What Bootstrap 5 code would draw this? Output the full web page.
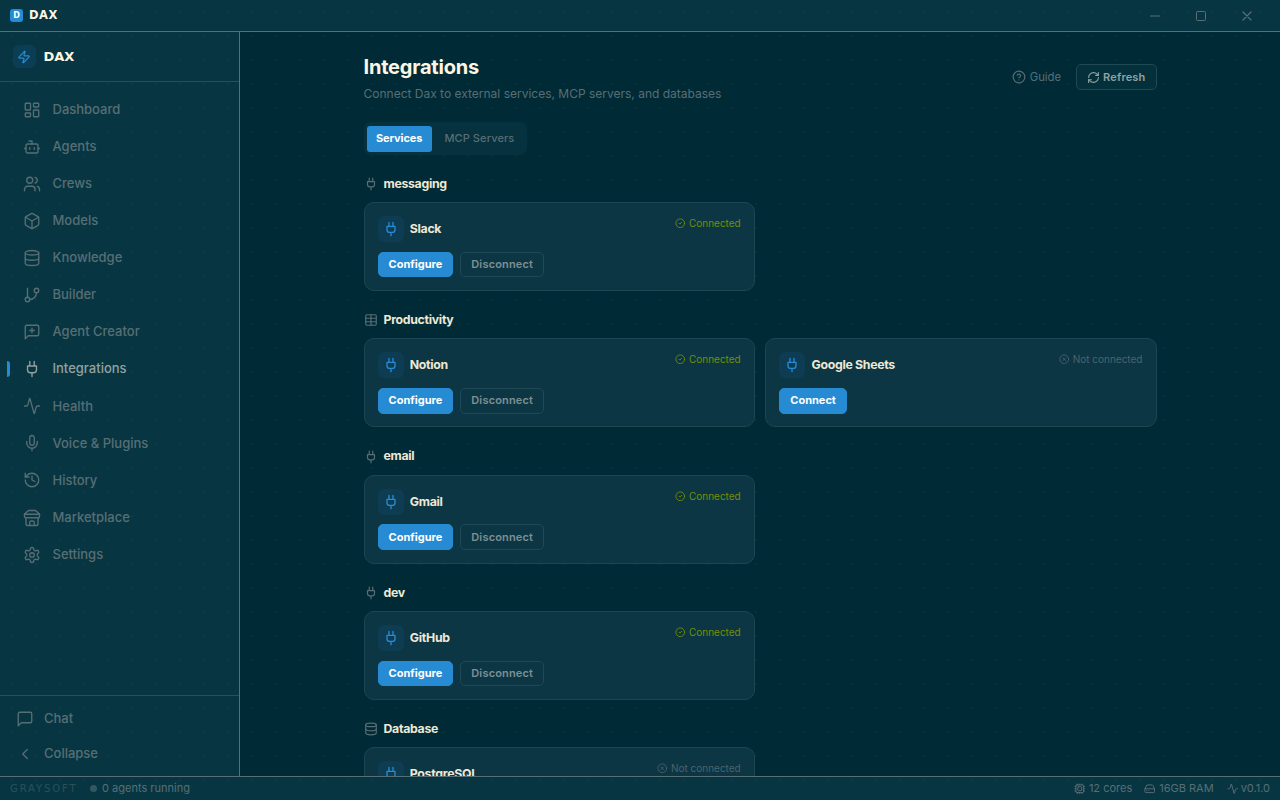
<!DOCTYPE html>
<html lang="en">
<head>
    <meta charset="UTF-8">
    <meta name="viewport" content="width=device-width, initial-scale=1.0">
    <title>DAX - Integrations</title>
    <link href="https://cdn.jsdelivr.net/npm/bootstrap@5.3.0/dist/css/bootstrap.min.css" rel="stylesheet">
    <style>
        :root {
            --base03: #002b36;
            --base02: #073642;
            --base01: #586e75;
            --base1: #93a1a1;
            --cream: #fdf6e3;
            --blue: #268bd2;
            --dots: radial-gradient(circle at 12px 12px, rgba(88, 110, 117, .09) 1px, transparent 1.2px);
        }
        body {
            font-family: Inter, "Liberation Sans", sans-serif;
            font-size: 13px;
            color: var(--base01);
            background-color: var(--base03);
            overflow: hidden;
        }
        .dotted {
            background-image: var(--dots);
            background-size: 24px 24px;
            background-attachment: fixed;
        }
        .icon {
            width: 16px;
            height: 16px;
            fill: none;
            stroke: currentColor;
            stroke-width: 2;
            stroke-linecap: round;
            stroke-linejoin: round;
            flex: none;
        }
        .brand {
            font-family: "DejaVu Sans", sans-serif;
            font-weight: 700;
            color: var(--cream);
            line-height: 1;
        }

        /* title bar */
        .titlebar {
            height: 32px;
            background-color: var(--base02);
            border-bottom: 1px solid var(--base01);
            padding-left: 10px;
        }
        .titlebar .brand {
            font-size: 11.5px;
            margin-left: 6px;
            letter-spacing: .5px;
        }
        .app-logo {
            width: 13px;
            height: 13px;
            border-radius: 3px;
            background-color: var(--blue);
            color: #fff;
            font: 700 8px/13px "DejaVu Sans", sans-serif;
            text-align: center;
        }
        .win-btns {
            margin-right: 10px;
        }
        .win-btn {
            width: 46px;
        }
        .win-btn .icon {
            width: 12px;
            height: 12px;
        }

        /* sidebar */
        .sidebar {
            width: 240px;
            background-color: var(--base02);
            border-right: 1px solid var(--base01);
            font-weight: 500;
        }
        .sidebar-head {
            height: 50px;
            padding-left: 12.5px;
            border-bottom: 1px solid #2a4f5a;
        }
        .sidebar-head .brand {
            font-size: 13px;
            margin-left: 8px;
        }
        .logo-box {
            width: 23px;
            height: 23px;
            border-radius: 6px;
            background-color: #0b3e54;
            color: var(--blue);
        }
        .logo-box .icon {
            width: 14px;
            height: 14px;
        }
        .side-nav {
            padding-top: 9px;
        }
        .side-link {
            position: relative;
            height: 37.1px;
            padding-left: 23px;
            gap: 11.5px;
            color: var(--base01);
        }
        .side-link .icon {
            width: 18px;
            height: 18px;
            stroke-width: 1.8;
        }
        .side-link.active {
            color: var(--base1);
        }
        .side-link.active::before {
            content: "";
            position: absolute;
            left: 7px;
            top: 10px;
            width: 3px;
            height: 16px;
            border-radius: 0 3px 3px 0;
            background-color: var(--blue);
        }
        .side-foot {
            height: 81px;
            padding-top: 5px;
            border-top: 1px solid #2a4f5a;
        }
        .side-foot .side-link {
            height: 35px;
            padding-left: 16px;
            gap: 10px;
        }

        /* page */
        .page {
            width: 793px;
            margin: 0 auto;
            padding-top: 23px;
        }
        .page h1 {
            font-size: 20px;
            font-weight: 700;
            line-height: 25px;
            letter-spacing: -.2px;
            color: var(--cream);
            margin: 0;
        }
        .subtitle {
            font-size: 12px;
            line-height: 18px;
            margin: 5px 0 0;
        }
        .page-actions {
            height: 44px;
        }
        .guide {
            font-size: 11.3px;
            gap: 4px;
            margin-right: 15px;
        }
        .guide .icon {
            width: 14px;
            height: 14px;
        }
        .btn-dax {
            height: 25.5px;
            padding: 0 10px;
            border: 1px solid #1f4955;
            border-radius: 5px;
            font-size: 11px;
            font-weight: 600;
            line-height: 23px;
            letter-spacing: .17px;
            color: #7d8f93;
        }
        .btn-dax.primary {
            background-color: var(--blue);
            border-color: var(--blue);
            color: #fff;
            font-weight: 700;
            letter-spacing: 0;
        }
        .btn-dax.refresh {
            background-color: #04303c;
            color: var(--base1);
            gap: 3px;
        }
        .btn-dax.refresh .icon {
            width: 13px;
            height: 13px;
        }
        .tabs {
            width: 163px;
            height: 33px;
            padding: 3px;
            margin-top: 19px;
            border-radius: 7px;
            background-color: #05323e;
            font-size: 11px;
            font-weight: 500;
            white-space: nowrap;
        }
        .tabs .tab-item {
            height: 26px;
            padding: 0 9.5px;
            line-height: 25px;
            border-radius: 3px;
            letter-spacing: .1px;
        }
        .tabs .tab-item.active {
            background-color: var(--blue);
            color: #fff;
            font-weight: 700;
            letter-spacing: -.1px;
            margin-right: 3px;
        }
        .sections {
            padding-top: 19px;
        }
        .section-block {
            height: 136.3px;
        }
        .section-block h2 {
            height: 20px;
            margin: 0 0 8.2px;
            gap: 6px;
            font-size: 12.3px;
            font-weight: 700;
            letter-spacing: -.3px;
            color: #eee8d5;
        }
        .section-block h2 .icon {
            width: 14px;
            height: 14px;
            color: var(--base01);
        }
        .service-grid {
            display: grid;
            grid-template-columns: 1fr 1fr;
            gap: 10.5px;
        }
        .service {
            height: 89px;
            padding: 13px;
            border: 1px solid #1d4552;
            border-radius: 10px;
            background-color: #0c3644;
        }
        .service-icon {
            width: 26px;
            height: 26px;
            border-radius: 6px;
            background-color: #0d3c53;
            color: var(--blue);
        }
        .service-name {
            font-size: 12.3px;
            font-weight: 700;
            letter-spacing: -.3px;
            color: #eee8d5;
            margin-left: 6.3px;
        }
        .service-actions {
            gap: 7px;
            margin-top: 9.7px;
        }
        .state {
            font-size: 10px;
            gap: 3px;
            line-height: 14.5px;
        }
        .state .icon {
            width: 10.5px;
            height: 10.5px;
        }
        .state.on {
            color: #758f04;
        }
        .state.off {
            color: #4a646d;
        }

        /* status bar */
        .statusbar {
            height: 24px;
            padding: 0 10px;
            border-top: 1px solid var(--base01);
            background-color: var(--base02);
            font-size: 11px;
        }
        .maker {
            font: 400 10px "DejaVu Sans", sans-serif;
            letter-spacing: 1.9px;
            color: #2c505b;
        }
        .dot {
            width: 7px;
            height: 7px;
            border-radius: 50%;
            background-color: #365762;
            margin: 0 5.5px 0 12px;
        }
        .statusbar .icon {
            width: 11.5px;
            height: 11.5px;
            margin-right: 3.5px;
        }
        .statusbar .ram {
            margin: 0 13px 0 12px;
        }
        .statusbar .version .icon {
            margin-right: 2.5px;
        }
    </style>
</head>
<body>

<svg class="d-none">
    <symbol id="i-dashboard" viewBox="0 0 24 24"><rect width="7" height="9" x="3" y="3" rx="1"/><rect width="7" height="5" x="14" y="3" rx="1"/><rect width="7" height="9" x="14" y="12" rx="1"/><rect width="7" height="5" x="3" y="16" rx="1"/></symbol>
    <symbol id="i-bot" viewBox="0 0 24 24"><path d="M12 8V4H8"/><rect width="16" height="12" x="4" y="8" rx="2"/><path d="M2 14h2M20 14h2M15 13v2M9 13v2"/></symbol>
    <symbol id="i-users" viewBox="0 0 24 24"><path d="M16 21v-2a4 4 0 0 0-4-4H6a4 4 0 0 0-4 4v2"/><circle cx="9" cy="7" r="4"/><path d="M22 21v-2a4 4 0 0 0-3-3.87M16 3.13a4 4 0 0 1 0 7.75"/></symbol>
    <symbol id="i-box" viewBox="0 0 24 24"><path d="M21 8a2 2 0 0 0-1-1.73l-7-4a2 2 0 0 0-2 0l-7 4A2 2 0 0 0 3 8v8a2 2 0 0 0 1 1.73l7 4a2 2 0 0 0 2 0l7-4A2 2 0 0 0 21 16Z"/><path d="m3.3 7 8.7 5 8.7-5M12 22V12"/></symbol>
    <symbol id="i-database" viewBox="0 0 24 24"><ellipse cx="12" cy="5" rx="9" ry="3"/><path d="M3 5v14a9 3 0 0 0 18 0V5"/><path d="M3 12a9 3 0 0 0 18 0"/></symbol>
    <symbol id="i-branch" viewBox="0 0 24 24"><path d="M6 3v12"/><circle cx="18" cy="6" r="3"/><circle cx="6" cy="18" r="3"/><path d="M18 9a9 9 0 0 1-9 9"/></symbol>
    <symbol id="i-message-plus" viewBox="0 0 24 24"><path d="M21 15a2 2 0 0 1-2 2H7l-4 4V5a2 2 0 0 1 2-2h14a2 2 0 0 1 2 2z"/><path d="M12 7v6M9 10h6"/></symbol>
    <symbol id="i-message" viewBox="0 0 24 24"><path d="M21 15a2 2 0 0 1-2 2H7l-4 4V5a2 2 0 0 1 2-2h14a2 2 0 0 1 2 2z"/></symbol>
    <symbol id="i-plug" viewBox="0 0 24 24"><path d="M12 22v-5M9 8V2M15 8V2M18 8v5a4 4 0 0 1-4 4h-4a4 4 0 0 1-4-4V8Z"/></symbol>
    <symbol id="i-activity" viewBox="0 0 24 24"><path d="M22 12h-2.48a2 2 0 0 0-1.93 1.46l-2.35 8.36a.25.25 0 0 1-.48 0L9.24 2.18a.25.25 0 0 0-.48 0l-2.35 8.36A2 2 0 0 1 4.49 12H2"/></symbol>
    <symbol id="i-mic" viewBox="0 0 24 24"><path d="M12 2a3 3 0 0 0-3 3v7a3 3 0 0 0 6 0V5a3 3 0 0 0-3-3Z"/><path d="M19 10v2a7 7 0 0 1-14 0v-2M12 19v3"/></symbol>
    <symbol id="i-history" viewBox="0 0 24 24"><path d="M3 12a9 9 0 1 0 9-9 9.75 9.75 0 0 0-6.74 2.74L3 8"/><path d="M3 3v5h5M12 7v5l4 2"/></symbol>
    <symbol id="i-store" viewBox="0 0 24 24"><path d="m2 7 4.41-4.41A2 2 0 0 1 7.83 2h8.34a2 2 0 0 1 1.42.59L22 7"/><path d="M4 12v8a2 2 0 0 0 2 2h12a2 2 0 0 0 2-2v-8"/><path d="M15 22v-4a2 2 0 0 0-2-2h-2a2 2 0 0 0-2 2v4M2 7h20"/><path d="M22 7v3a2 2 0 0 1-2 2 2.7 2.7 0 0 1-1.59-.63.7.7 0 0 0-.82 0A2.7 2.7 0 0 1 16 12a2.7 2.7 0 0 1-1.59-.63.7.7 0 0 0-.82 0A2.7 2.7 0 0 1 12 12a2.7 2.7 0 0 1-1.59-.63.7.7 0 0 0-.82 0A2.7 2.7 0 0 1 8 12a2.7 2.7 0 0 1-1.59-.63.7.7 0 0 0-.82 0A2.7 2.7 0 0 1 4 12a2 2 0 0 1-2-2V7"/></symbol>
    <symbol id="i-settings" viewBox="0 0 24 24"><path d="M12.22 2h-.44a2 2 0 0 0-2 2v.18a2 2 0 0 1-1 1.73l-.43.25a2 2 0 0 1-2 0l-.15-.08a2 2 0 0 0-2.73.73l-.22.38a2 2 0 0 0 .73 2.73l.15.1a2 2 0 0 1 1 1.72v.51a2 2 0 0 1-1 1.74l-.15.09a2 2 0 0 0-.73 2.73l.22.38a2 2 0 0 0 2.73.73l.15-.08a2 2 0 0 1 2 0l.43.25a2 2 0 0 1 1 1.73V20a2 2 0 0 0 2 2h.44a2 2 0 0 0 2-2v-.18a2 2 0 0 1 1-1.73l.43-.25a2 2 0 0 1 2 0l.15.08a2 2 0 0 0 2.73-.73l.22-.39a2 2 0 0 0-.73-2.73l-.15-.08a2 2 0 0 1-1-1.74v-.5a2 2 0 0 1 1-1.74l.15-.09a2 2 0 0 0 .73-2.73l-.22-.38a2 2 0 0 0-2.73-.73l-.15.08a2 2 0 0 1-2 0l-.43-.25a2 2 0 0 1-1-1.73V4a2 2 0 0 0-2-2z"/><circle cx="12" cy="12" r="3"/></symbol>
    <symbol id="i-chevron" viewBox="0 0 24 24"><path d="m15 18-6-6 6-6"/></symbol>
    <symbol id="i-zap" viewBox="0 0 24 24"><path d="M4 14a1 1 0 0 1-.78-1.63l9.9-10.2a.5.5 0 0 1 .86.46l-1.92 6.02A1 1 0 0 0 13 10h7a1 1 0 0 1 .78 1.63l-9.9 10.2a.5.5 0 0 1-.86-.46l1.92-6.02A1 1 0 0 0 11 14z"/></symbol>
    <symbol id="i-help" viewBox="0 0 24 24"><circle cx="12" cy="12" r="10"/><path d="M9.09 9a3 3 0 0 1 5.83 1c0 2-3 3-3 3M12 17h.01"/></symbol>
    <symbol id="i-refresh" viewBox="0 0 24 24"><path d="M3 12a9 9 0 0 1 9-9 9.75 9.75 0 0 1 6.74 2.74L21 8"/><path d="M21 3v5h-5M21 12a9 9 0 0 1-9 9 9.75 9.75 0 0 1-6.74-2.74L3 16"/><path d="M8 16H3v5"/></symbol>
    <symbol id="i-table" viewBox="0 0 24 24"><rect width="18" height="18" x="3" y="3" rx="2"/><path d="M12 3v18M3 9h18M3 15h18"/></symbol>
    <symbol id="i-check" viewBox="0 0 24 24"><circle cx="12" cy="12" r="10"/><path d="m9 12 2 2 4-4"/></symbol>
    <symbol id="i-cross" viewBox="0 0 24 24"><circle cx="12" cy="12" r="10"/><path d="m15 9-6 6M9 9l6 6"/></symbol>
    <symbol id="i-cpu" viewBox="0 0 24 24"><rect width="16" height="16" x="4" y="4" rx="2"/><rect width="8" height="8" x="8" y="8" rx="1"/><path d="M12 2v2M12 20v2M17 2v2M17 20v2M7 2v2M7 20v2M2 12h2M20 12h2M2 17h2M20 17h2M2 7h2M20 7h2"/></symbol>
    <symbol id="i-drive" viewBox="0 0 24 24"><path d="M22 12H2"/><path d="M5.45 5.11 2 12v6a2 2 0 0 0 2 2h16a2 2 0 0 0 2-2v-6l-3.45-6.89A2 2 0 0 0 16.76 4H7.24a2 2 0 0 0-1.79 1.11z"/><path d="M6 16h.01M10 16h.01"/></symbol>
    <symbol id="i-min" viewBox="0 0 12 12"><path d="M1.5 6h9" stroke-width="1.2"/></symbol>
    <symbol id="i-max" viewBox="0 0 12 12"><rect x="1.5" y="1.5" width="9" height="9" rx="1" stroke-width="1"/></symbol>
    <symbol id="i-close" viewBox="0 0 12 12"><path d="m2 2 8 8M10 2l-8 8" stroke-width="1.2"/></symbol>
</svg>

<div class="d-flex flex-column vh-100">
    <header class="titlebar dotted d-flex align-items-center flex-shrink-0">
        <span class="app-logo">D</span>
        <span class="brand">DAX</span>
        <div class="win-btns d-flex ms-auto">
            <span class="win-btn d-flex justify-content-center"><svg class="icon"><use href="#i-min"/></svg></span>
            <span class="win-btn d-flex justify-content-center"><svg class="icon"><use href="#i-max"/></svg></span>
            <span class="win-btn d-flex justify-content-center"><svg class="icon"><use href="#i-close"/></svg></span>
        </div>
    </header>

    <div class="d-flex flex-grow-1 overflow-hidden">
        <aside class="sidebar dotted d-flex flex-column flex-shrink-0">
            <div class="sidebar-head d-flex align-items-center flex-shrink-0">
                <span class="logo-box d-flex align-items-center justify-content-center"><svg class="icon"><use href="#i-zap"/></svg></span>
                <span class="brand">DAX</span>
            </div>
            <nav class="side-nav flex-grow-1" id="sideNav"></nav>
            <div class="side-foot">
                <a class="side-link d-flex align-items-center text-decoration-none"><svg class="icon"><use href="#i-message"/></svg>Chat</a>
                <a class="side-link d-flex align-items-center text-decoration-none"><svg class="icon"><use href="#i-chevron"/></svg>Collapse</a>
            </div>
        </aside>

        <main class="dotted flex-grow-1 overflow-hidden">
            <div class="page">
                <div class="d-flex justify-content-between">
                    <div>
                        <h1>Integrations</h1>
                        <p class="subtitle">Connect Dax to external services, MCP servers, and databases</p>
                    </div>
                    <div class="page-actions d-flex align-items-center">
                        <span class="guide d-flex align-items-center"><svg class="icon"><use href="#i-help"/></svg>Guide</span>
                        <button class="btn btn-dax refresh d-flex align-items-center"><svg class="icon"><use href="#i-refresh"/></svg>Refresh</button>
                    </div>
                </div>
                <div class="tabs d-flex align-items-center">
                    <span class="tab-item active">Services</span>
                    <span class="tab-item">MCP Servers</span>
                </div>
                <div id="sections" class="sections"></div>
            </div>
        </main>
    </div>

    <footer class="statusbar dotted d-flex align-items-center flex-shrink-0">
        <span class="maker">GRAYSOFT</span>
        <span class="dot"></span>
        <span>0 agents running</span>
        <span class="d-flex align-items-center ms-auto"><svg class="icon"><use href="#i-cpu"/></svg>12 cores</span>
        <span class="ram d-flex align-items-center"><svg class="icon"><use href="#i-drive"/></svg>16GB RAM</span>
        <span class="version d-flex align-items-center"><svg class="icon"><use href="#i-activity"/></svg>v0.1.0</span>
    </footer>
</div>

<script src="https://cdn.jsdelivr.net/npm/bootstrap@5.3.0/dist/js/bootstrap.bundle.min.js"></script>
<script>
    const navItems = [
        ['dashboard', 'Dashboard'],
        ['bot', 'Agents'],
        ['users', 'Crews'],
        ['box', 'Models'],
        ['database', 'Knowledge'],
        ['branch', 'Builder'],
        ['message-plus', 'Agent Creator'],
        ['plug', 'Integrations'],
        ['activity', 'Health'],
        ['mic', 'Voice &amp; Plugins'],
        ['history', 'History'],
        ['store', 'Marketplace'],
        ['settings', 'Settings']
    ];

    const sections = [
        { title: 'messaging', icon: 'plug', services: [['Slack', true]] },
        { title: 'Productivity', icon: 'table', services: [['Notion', true], ['Google Sheets', false]] },
        { title: 'email', icon: 'plug', services: [['Gmail', true]] },
        { title: 'dev', icon: 'plug', services: [['GitHub', true]] },
        { title: 'Database', icon: 'database', services: [['PostgreSQL', false]] }
    ];

    const icon = name => `<svg class="icon"><use href="#i-${name}"/></svg>`;

    function serviceCard([name, connected]) {
        const state = connected
            ? `<span class="state on d-flex align-items-center">${icon('check')}Connected</span>`
            : `<span class="state off d-flex align-items-center">${icon('cross')}Not connected</span>`;
        const buttons = connected
            ? `<button class="btn btn-dax primary">Configure</button><button class="btn btn-dax">Disconnect</button>`
            : `<button class="btn btn-dax primary">Connect</button>`;
        return `
            <div class="service">
                <div class="d-flex align-items-start justify-content-between">
                    <div class="d-flex align-items-center">
                        <span class="service-icon d-flex align-items-center justify-content-center">${icon('plug')}</span>
                        <span class="service-name">${name}</span>
                    </div>
                    ${state}
                </div>
                <div class="service-actions d-flex">${buttons}</div>
            </div>`;
    }

    document.getElementById('sideNav').innerHTML = navItems.map(([id, label]) => `
        <a class="side-link d-flex align-items-center text-decoration-none ${label === 'Integrations' ? 'active' : ''}">${icon(id)}${label}</a>
    `).join('');

    document.getElementById('sections').innerHTML = sections.map(s => `
        <section class="section-block">
            <h2 class="d-flex align-items-center">${icon(s.icon)}${s.title}</h2>
            <div class="service-grid">${s.services.map(serviceCard).join('')}</div>
        </section>
    `).join('');
</script>
</body>
</html>
